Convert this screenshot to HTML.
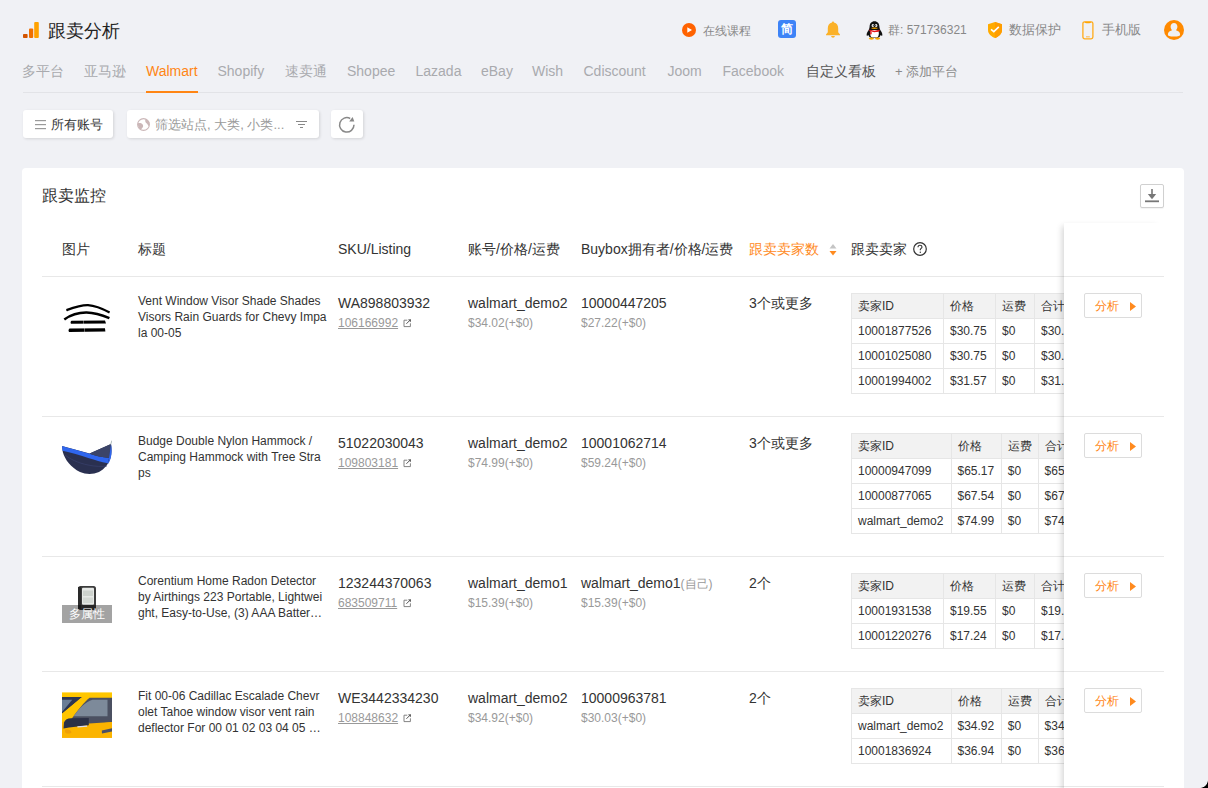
<!DOCTYPE html>
<html><head><meta charset="utf-8">
<style>
*{box-sizing:border-box;margin:0;padding:0}
html,body{width:1208px;height:788px;overflow:hidden}
body{background:#f0f1f5;font-family:"Liberation Sans",sans-serif;color:#333;position:relative}
.a{position:absolute;white-space:nowrap}
svg{position:absolute;display:block}
.t14{font-size:14px;line-height:20px}
.t12{font-size:12px;line-height:16px}
.t13{font-size:13px;line-height:18px}
.tab{position:absolute;top:61px;font-size:14px;line-height:20px;color:#a9aaae;white-space:nowrap}
.hdr{color:#888;font-size:12px;line-height:16px;top:22px}
.btn{position:absolute;background:#fff;border-radius:3px;box-shadow:1px 1px 3px rgba(0,0,0,.12)}
.card{position:absolute;left:22px;top:168px;width:1162px;height:640px;background:#fff;border-radius:4px}
.th{position:absolute;top:239px;font-size:14px;line-height:20px;color:#333;white-space:nowrap}
.hl{position:absolute;left:42px;width:1122px;height:1px;background:#e8e8e8}
.ttl{position:absolute;left:138px;width:192px;font-size:12px;line-height:16px;color:#333;word-break:break-all;white-space:normal}
.sku{position:absolute;left:338px;font-size:14px;line-height:20px;white-space:nowrap}
.lnk{position:absolute;left:338px;font-size:12px;line-height:16px;color:#999;text-decoration:underline;white-space:nowrap}
.acc{position:absolute;font-size:14px;line-height:20px;white-space:nowrap}
.pr{position:absolute;font-size:12px;line-height:16px;color:#999;white-space:nowrap}
.nt{position:absolute;left:851px;border-collapse:collapse;font-size:12px;color:#333}
.nt td{border:1px solid #e6e6e6;height:25px;padding:0 6px;white-space:nowrap;line-height:16px}
.nt tr:first-child td{background:#f2f2f2}
.fx{position:absolute;left:1064px;top:223px;width:100px;height:600px;background:#fff;box-shadow:-5px 0 6px -3px rgba(0,0,0,.16)}
.an{position:absolute;left:1084px;width:58px;height:25px;border:1px solid #dcdcdc;border-radius:2px;background:#fff}
.an span{position:absolute;left:10px;top:4px;font-size:12px;line-height:16px;color:#ff8514}
</style></head><body>

<!-- logo -->
<svg style="left:23px;top:22px" width="16" height="16" viewBox="0 0 16 16">
<rect x="0" y="12" width="4.6" height="4" rx="0.8" fill="#d35400"/>
<rect x="6" y="6.5" width="4.2" height="9.5" rx="1" fill="#f07000"/>
<rect x="11.2" y="0" width="4.6" height="16" rx="1" fill="#ffa200"/>
</svg>
<div class="a" style="left:48px;top:19px;font-size:18px;line-height:24px;color:#222;font-weight:500">跟卖分析</div>

<!-- header right -->
<svg style="left:682px;top:23px" width="14" height="14" viewBox="0 0 14 14"><circle cx="7" cy="7" r="7" fill="#ff6200"/><path d="M5.3 4.2 L10 7 L5.3 9.8Z" fill="#fff"/></svg>
<div class="a hdr" style="left:702.5px;top:22.7px">在线课程</div>
<div class="a" style="left:778px;top:20px;width:18px;height:18px;background:#3d83f7;border-radius:3px;color:#fff;font-size:12px;line-height:18px;text-align:center;font-weight:bold">简</div>
<svg style="left:825px;top:20.5px" width="16" height="17" viewBox="0 0 16 17"><path d="M8 0.5c0.7 0 1 .5 1 1 2.8.6 4.2 2.8 4.2 5.8v4l1.8 2.2v.8H1v-.8l1.8-2.2v-4C2.8 4.3 4.2 2.1 7 1.5c0-.5.3-1 1-1z" fill="#fbb128"/><path d="M6.2 15h3.6c0 1-.8 1.7-1.8 1.7S6.2 16 6.2 15z" fill="#fbb128"/></svg>
<svg style="left:865.5px;top:20.5px" width="17" height="19" viewBox="0 0 17 19">
<path d="M8.5 0.3 C11.6 0.3 13.3 2.6 13.4 5.6 C13.5 7 13.8 8.4 14.6 9.6 C15.8 11.3 16.6 13 16.3 14.4 C16 15.2 15.2 14.8 14.6 14 C14.2 15.5 13 16.6 11.5 17 L5.5 17 C4 16.6 2.8 15.5 2.4 14 C1.8 14.8 1 15.2 .7 14.4 C.4 13 1.2 11.3 2.4 9.6 C3.2 8.4 3.5 7 3.6 5.6 C3.7 2.6 5.4 .3 8.5 .3z" fill="#111"/>
<path d="M4.3 11 C4.5 9.5 6 9 8.5 9 C11 9 12.5 9.5 12.7 11 C13.2 13 12.6 15.8 11 16.6 L6 16.6 C4.4 15.8 3.8 13 4.3 11z" fill="#fff"/>
<ellipse cx="6.9" cy="4.5" rx="1.25" ry="1.5" fill="#fff"/><ellipse cx="10.1" cy="4.5" rx="1.25" ry="1.5" fill="#fff"/>
<circle cx="7.3" cy="4.7" r=".6" fill="#111"/><circle cx="9.7" cy="4.7" r=".6" fill="#111"/>
<path d="M5.2 7 C6.5 6.3 10.5 6.3 11.8 7 C11 8.2 6 8.2 5.2 7z" fill="#f5a500"/>
<path d="M3.6 8.6 C6 10 11 10 13.4 8.6 L13.7 10 C11 11.6 6 11.6 3.3 10z" fill="#e8141a"/>
<path d="M4.4 10.4 L4 13.6 L5.6 13.2 L5.6 10.8z" fill="#e8141a"/>
<ellipse cx="5.4" cy="17.6" rx="2.6" ry="1.1" fill="#f5a800"/><ellipse cx="11.6" cy="17.6" rx="2.6" ry="1.1" fill="#f5a800"/>
</svg>
<div class="a hdr" style="left:888px">群: 571736321</div>
<svg style="left:988px;top:22px" width="14" height="16" viewBox="0 0 14 16"><path d="M7 0 L14 2.3 V8 C14 11.8 10.8 14.6 7 16 C3.2 14.6 0 11.8 0 8 V2.3Z" fill="#ffab00"/><path d="M7 0 L14 2.3 V8 C14 11.8 10.8 14.6 7 16Z" fill="#ff9d00"/><path d="M3 7.3 L5.8 9.6 L10.8 4.8" stroke="#fff" stroke-width="1.6" fill="none"/></svg>
<div class="a hdr" style="left:1009px;font-size:13px;top:21.5px">数据保护</div>
<svg style="left:1082px;top:20.5px" width="12" height="19" viewBox="0 0 12 19"><rect x=".9" y=".8" width="10" height="17.1" rx="1.8" fill="none" stroke="#ffab1a" stroke-width="1.3"/><path d="M2.5 .8 H9.3 C9 2 8 2.3 5.9 2.3 C3.8 2.3 2.8 2 2.5 .8z" fill="#ffa500"/><rect x="4" y="15.4" width="3.8" height=".9" fill="#ffb030"/></svg>
<div class="a hdr" style="left:1101.5px;font-size:13px;top:21.5px">手机版</div>
<svg style="left:1164px;top:20px" width="20" height="20" viewBox="0 0 20 20"><circle cx="10" cy="10" r="10" fill="#ff8a00"/><path d="M10 2.9 C12 2.9 13.4 4.5 13.4 6.5 C13.4 8.2 12.6 9.5 12 10.3 C14.5 11 16.1 12.5 16.1 14.5 C16.1 16 14.5 16.6 10 16.6 C5.5 16.6 3.9 16 3.9 14.5 C3.9 12.5 5.5 11 8 10.3 C7.4 9.5 6.6 8.2 6.6 6.5 C6.6 4.5 8 2.9 10 2.9z" fill="#eff0f4"/></svg>

<!-- tabs -->
<div class="tab" style="left:22px">多平台</div>
<div class="tab" style="left:84px">亚马逊</div>
<div class="tab" style="left:146px;color:#ff8514">Walmart</div>
<div class="tab" style="left:217.5px">Shopify</div>
<div class="tab" style="left:285px">速卖通</div>
<div class="tab" style="left:347px">Shopee</div>
<div class="tab" style="left:415.5px">Lazada</div>
<div class="tab" style="left:481px">eBay</div>
<div class="tab" style="left:532px">Wish</div>
<div class="tab" style="left:583.5px">Cdiscount</div>
<div class="tab" style="left:667.5px">Joom</div>
<div class="tab" style="left:722.5px">Facebook</div>
<div class="tab" style="left:806px;color:#555">自定义看板</div>
<div class="tab" style="left:895px;color:#8a8a8a;font-size:13px;top:62px">+ 添加平台</div>
<div class="a" style="left:23px;top:92px;width:1160px;height:1px;background:#e2e3e7"></div>
<div class="a" style="left:146px;top:91px;width:52px;height:2px;background:#ff8514"></div>

<!-- filter buttons -->
<div class="btn" style="left:23px;top:110px;width:90px;height:28px"></div>
<svg style="left:35px;top:119px" width="11" height="11" viewBox="0 0 11 11"><rect y="1" width="11" height="1.2" fill="#9a9a9a"/><rect y="5" width="11" height="1.2" fill="#9a9a9a"/><rect y="9" width="11" height="1.2" fill="#9a9a9a"/></svg>
<div class="a t13" style="left:51px;top:115.5px;color:#333">所有账号</div>
<div class="btn" style="left:127px;top:110px;width:192px;height:28px"></div>
<svg style="left:137px;top:118px" width="13" height="13" viewBox="0 0 13 13"><circle cx="6.5" cy="6.5" r="5.9" fill="none" stroke="#cbb7b8" stroke-width="1.1"/><path d="M0.8 5.2 C2.5 4.6 4.5 5 5.5 6.3 C6.5 7.6 6.3 9 5.2 10 C4.6 10.5 4.2 11.5 4 12 C2 10.8 0.8 8.5 0.8 5.2z" fill="#cbb7b8"/><path d="M8.4 1.2 C8 2.5 8.2 4 9.2 5 C10 5.8 11 6.5 11.5 8.3 C12.5 7 12.8 4.5 12 3.5 C11 2.2 9.8 1.5 8.4 1.2z" fill="#cbb7b8"/></svg>
<div class="a t13" style="left:155px;top:115.5px;color:#9a9a9a">筛选站点, 大类, 小类...</div>
<svg style="left:295px;top:120px" width="13" height="9" viewBox="0 0 13 9"><rect x="1" y="1" width="11" height="1" fill="#888"/><rect x="3" y="4" width="7" height="1" fill="#888"/><rect x="5" y="7" width="3" height="1" fill="#888"/></svg>
<div class="btn" style="left:331px;top:110px;width:32px;height:28px"></div>
<svg style="left:338px;top:116px" width="18" height="18" viewBox="0 0 18 18"><path d="M16 8.8 A7.2 7.2 0 1 1 12.2 2.5" fill="none" stroke="#888" stroke-width="1.5"/><path d="M14.6 1 L11.2 5.4 L16.3 5.6z" fill="#888"/></svg>

<!-- card -->
<div class="card"></div>
<div class="a" style="left:42px;top:185px;font-size:16px;line-height:22px;color:#333">跟卖监控</div>
<div class="a" style="left:1140px;top:184px;width:24px;height:24px;border:1px solid #d0d0d0;border-radius:2px;background:#fff;box-shadow:0 1px 1px rgba(0,0,0,.05)"></div>
<svg style="left:1145px;top:188px" width="14" height="16" viewBox="0 0 14 16"><rect x="6.2" y="1" width="1.6" height="7" fill="#777"/><path d="M2.8 6 L7 11.2 L11.2 6z" fill="#777"/><rect x="0" y="12.4" width="14" height="1.8" fill="#777"/></svg>


<div class="hl" style="top:416px"></div>
<svg style="left:62px;top:293px" width="50" height="50" viewBox="0 0 50 50">
<path d="M4.5 17.2 C12 14.5 20 12 26 12.2 C33 12.6 41 16 47.6 19.6" stroke="#000" stroke-width="2.3" fill="none"/>
<path d="M4.2 15.8 L5.5 18.5 L4.6 17.8z" fill="#000"/>
<path d="M2.3 26.5 C9 21.8 17 19.5 24.6 19.6 C33 19.7 41 22.5 47.4 25.2" stroke="#000" stroke-width="2.5" fill="none"/>
<path d="M9.5 27.8 L43 27.6 L44 30.4 L9 30.8 C8.3 29.8 8.6 28.4 9.5 27.8z" fill="#000"/>
<rect x="21.5" y="27" width="0.5" height="4.5" fill="#fff" opacity=".7"/>
<path d="M7.5 35.4 L43 35.2 L43.4 38.6 L7 38.9 C6.2 37.8 6.5 36 7.5 35.4z" fill="#000"/>
<rect x="22.4" y="34.8" width="0.5" height="4.5" fill="#fff" opacity=".7"/>
</svg>

<div class="a t12" style="left:138px;top:293px;color:#333">Vent Window Visor Shade Shades</div>
<div class="a t12" style="left:138px;top:309px;color:#333">Visors Rain Guards for Chevy Impa</div>
<div class="a t12" style="left:138px;top:325px;color:#333">la 00-05</div>
<div class="sku" style="top:292.5px">WA898803932</div>
<div class="lnk" style="top:315.2px">106166992</div>
<svg style="left:402.5px;top:318.7px" width="9" height="9" viewBox="0 0 9 9"><path d="M4.3 1.2 H1 V7.6 H7.4 V4.3" stroke="#777" stroke-width=".9" fill="none"/><path d="M3.4 4.8 L6.8 1.4" stroke="#555" stroke-width="1"/><path d="M5 .4 L8 .2 L7.8 3.2z" fill="#555"/></svg>
<div class="acc" style="left:468px;top:292.5px">walmart_demo2</div>
<div class="pr" style="left:468px;top:315.2px">$34.02(+$0)</div>
<div class="acc" style="left:581px;top:292.5px">10000447205</div>
<div class="pr" style="left:581px;top:315.2px">$27.22(+$0)</div>
<div class="acc" style="left:749px;top:293px">3个或更多</div>
<table class="nt" style="top:293px;width:243px;table-layout:fixed"><colgroup><col style="width:92px"><col style="width:52px"><col style="width:39px"><col style="width:60px"></colgroup><tr><td>卖家ID</td><td>价格</td><td>运费</td><td>合计</td></tr><tr><td>10001877526</td><td>$30.75</td><td>$0</td><td>$30.75</td></tr><tr><td>10001025080</td><td>$30.75</td><td>$0</td><td>$30.75</td></tr><tr><td>10001994002</td><td>$31.57</td><td>$0</td><td>$31.57</td></tr></table>
<div class="hl" style="top:556px"></div>
<svg style="left:62px;top:433px" width="50" height="50" viewBox="0 0 50 50">
<path d="M0 13 L0.8 19 C3 27 9 34.5 18 39 C24 41.5 31 41.5 37 39 C42.5 36 46.5 31 48.5 25 C50 20 49.6 14 49 11 L27.6 20.5 Z" fill="#2a3050"/>
<path d="M3 22 C8 26 16 30 26 32 C33 33.5 40 33.8 45 33" stroke="#3a4270" stroke-width=".8" fill="none" opacity=".8"/>
<path d="M0 13 C9 15.5 18 18 27.6 20.8 C34 22.8 40 24.5 47 25 L45.8 30.2 C39 28.8 33 27 27 25.2 C18 22.5 9 19.6 0.5 17.8 Z" fill="#2f66ee"/>
<path d="M27.6 20.5 L49 11 L47 25 C40 24.5 34 22.8 27.6 20.8z" fill="#3b4468"/>
<path d="M49 11 C49.8 15 50 21 48.6 25.5 C47.8 28 46.8 30 45.8 31.5 L47 25 Z" fill="#2f66ee"/>
<path d="M48.6 11.5 L50 7.5" stroke="#9aa" stroke-width=".8"/>
</svg>

<div class="a t12" style="left:138px;top:433px;color:#333">Budge Double Nylon Hammock /</div>
<div class="a t12" style="left:138px;top:449px;color:#333">Camping Hammock with Tree Stra</div>
<div class="a t12" style="left:138px;top:465px;color:#333">ps</div>
<div class="sku" style="top:432.5px">51022030043</div>
<div class="lnk" style="top:455.2px">109803181</div>
<svg style="left:402.5px;top:458.7px" width="9" height="9" viewBox="0 0 9 9"><path d="M4.3 1.2 H1 V7.6 H7.4 V4.3" stroke="#777" stroke-width=".9" fill="none"/><path d="M3.4 4.8 L6.8 1.4" stroke="#555" stroke-width="1"/><path d="M5 .4 L8 .2 L7.8 3.2z" fill="#555"/></svg>
<div class="acc" style="left:468px;top:432.5px">walmart_demo2</div>
<div class="pr" style="left:468px;top:455.2px">$74.99(+$0)</div>
<div class="acc" style="left:581px;top:432.5px">10001062714</div>
<div class="pr" style="left:581px;top:455.2px">$59.24(+$0)</div>
<div class="acc" style="left:749px;top:433px">3个或更多</div>
<table class="nt" style="top:433px;width:246.6px;table-layout:fixed"><colgroup><col style="width:99.5px"><col style="width:50.3px"><col style="width:36.8px"><col style="width:60px"></colgroup><tr><td>卖家ID</td><td>价格</td><td>运费</td><td>合计</td></tr><tr><td>10000947099</td><td>$65.17</td><td>$0</td><td>$65.17</td></tr><tr><td>10000877065</td><td>$67.54</td><td>$0</td><td>$67.54</td></tr><tr><td>walmart_demo2</td><td>$74.99</td><td>$0</td><td>$74.99</td></tr></table>
<div class="hl" style="top:671px"></div>
<svg style="left:62px;top:573px" width="50" height="50" viewBox="0 0 50 50">
<rect x="16" y="13" width="18" height="24" rx="2.5" fill="#3c3c3c"/>
<rect x="16" y="14" width="3" height="22" fill="#2a2a2a"/>
<rect x="20" y="14.7" width="12" height="17" rx="1" fill="#e6e9e6"/>
<rect x="21" y="17.5" width="10" height="5.5" fill="#cdd2cd"/>
<rect x="21" y="24.5" width="10" height="5.5" fill="#d3d8d3"/>
</svg>
<div class="a" style="left:62px;top:605px;width:50px;height:18px;background:rgba(0,0,0,.36);color:#fff;font-size:12px;line-height:18px;text-align:center">多属性</div>

<div class="a t12" style="left:138px;top:573px;color:#333">Corentium Home Radon Detector</div>
<div class="a t12" style="left:138px;top:589px;color:#333">by Airthings 223 Portable, Lightwei</div>
<div class="a t12" style="left:138px;top:605px;color:#333">ght, Easy-to-Use, (3) AAA Batter…</div>
<div class="sku" style="top:572.5px">123244370063</div>
<div class="lnk" style="top:595.2px">683509711</div>
<svg style="left:402.5px;top:598.7px" width="9" height="9" viewBox="0 0 9 9"><path d="M4.3 1.2 H1 V7.6 H7.4 V4.3" stroke="#777" stroke-width=".9" fill="none"/><path d="M3.4 4.8 L6.8 1.4" stroke="#555" stroke-width="1"/><path d="M5 .4 L8 .2 L7.8 3.2z" fill="#555"/></svg>
<div class="acc" style="left:468px;top:572.5px">walmart_demo1</div>
<div class="pr" style="left:468px;top:595.2px">$15.39(+$0)</div>
<div class="acc" style="left:581px;top:572.5px">walmart_demo1<span style="font-size:12px;color:#999">(自己)</span></div>
<div class="pr" style="left:581px;top:595.2px">$15.39(+$0)</div>
<div class="acc" style="left:749px;top:573px">2个</div>
<table class="nt" style="top:573px;width:243px;table-layout:fixed"><colgroup><col style="width:92px"><col style="width:52px"><col style="width:39px"><col style="width:60px"></colgroup><tr><td>卖家ID</td><td>价格</td><td>运费</td><td>合计</td></tr><tr><td>10001931538</td><td>$19.55</td><td>$0</td><td>$19.55</td></tr><tr><td>10001220276</td><td>$17.24</td><td>$0</td><td>$17.24</td></tr></table>
<div class="hl" style="top:786px"></div>
<svg style="left:62px;top:688px" width="50" height="50" viewBox="0 0 50 50">
<defs><linearGradient id="cb" x1="0" y1="0" x2="0" y2="1"><stop offset="0" stop-color="#ffc800"/><stop offset="1" stop-color="#f9a800"/></linearGradient></defs>
<rect x="0" y="4.4" width="50" height="45.4" fill="url(#cb)"/>
<path d="M0 8.9 L20.2 8.9 L0 25.8z" fill="#2c3652"/>
<path d="M0 11.8 L10.3 11.8 L0 24z" fill="#6a7d96"/>
<path d="M20.2 8.9 L27.6 8.9 C22 14 16 22 9.5 30.5 L0 34 L0 25.8z" fill="#ffc400"/>
<path d="M27.6 9.7 L50 9.7 L50 34 L27 35.5 L9.5 31 C16 22 22 14 27.6 9.7z" fill="#4b5061"/>
<path d="M30.5 11.8 L45.5 11.8 L45.5 28.3 L11.5 28.3 C17 20.5 23 14 30.5 11.8z" fill="#7d8a9a"/>
<path d="M0 40.5 L27 37 L50 34 L50 49.8 L0 49.8z" fill="#fbb400"/>
<path d="M2 34.5 C3 31.5 5.5 30.3 9 30.2 L26.8 30 L26.8 37.3 L7 39.5 L1.5 40.5z" fill="#2b3046"/>
<path d="M15.3 38.3 L25 37.5 L25.2 38.8 L15.5 39.5z" fill="#dde"/>
<path d="M3 42 C6 41 9 42 9.5 44.5 C8 46 4 46 3 44z" fill="#e8950a" opacity=".7"/>
<path d="M39.8 42.5 L50 40.3 L50 43.5 L40 45.5z" fill="#4a5066"/>
</svg>

<div class="a t12" style="left:138px;top:688px;color:#333">Fit 00-06 Cadillac Escalade Chevr</div>
<div class="a t12" style="left:138px;top:704px;color:#333">olet Tahoe window visor vent rain</div>
<div class="a t12" style="left:138px;top:720px;color:#333">deflector For 00 01 02 03 04 05 …</div>
<div class="sku" style="top:687.5px">WE3442334230</div>
<div class="lnk" style="top:710.2px">108848632</div>
<svg style="left:402.5px;top:713.7px" width="9" height="9" viewBox="0 0 9 9"><path d="M4.3 1.2 H1 V7.6 H7.4 V4.3" stroke="#777" stroke-width=".9" fill="none"/><path d="M3.4 4.8 L6.8 1.4" stroke="#555" stroke-width="1"/><path d="M5 .4 L8 .2 L7.8 3.2z" fill="#555"/></svg>
<div class="acc" style="left:468px;top:687.5px">walmart_demo2</div>
<div class="pr" style="left:468px;top:710.2px">$34.92(+$0)</div>
<div class="acc" style="left:581px;top:687.5px">10000963781</div>
<div class="pr" style="left:581px;top:710.2px">$30.03(+$0)</div>
<div class="acc" style="left:749px;top:688px">2个</div>
<table class="nt" style="top:688px;width:246.6px;table-layout:fixed"><colgroup><col style="width:99.5px"><col style="width:50.3px"><col style="width:36.8px"><col style="width:60px"></colgroup><tr><td>卖家ID</td><td>价格</td><td>运费</td><td>合计</td></tr><tr><td>walmart_demo2</td><td>$34.92</td><td>$0</td><td>$34.92</td></tr><tr><td>10001836924</td><td>$36.94</td><td>$0</td><td>$36.94</td></tr></table>

<div class="th" style="left:62px">图片</div>
<div class="th" style="left:138px">标题</div>
<div class="th" style="left:338px">SKU/Listing</div>
<div class="th" style="left:468px">账号/价格/运费</div>
<div class="th" style="left:581px">Buybox拥有者/价格/运费</div>
<div class="th" style="left:749px;color:#ff8a1e">跟卖卖家数</div>
<svg style="left:829px;top:243px" width="8" height="13" viewBox="0 0 8 13"><path d="M4 1 L7.5 5.5 H.5z" fill="#c4c4c4"/><path d="M4 12.5 L7.5 8 H.5z" fill="#ff8a1e"/></svg>
<div class="th" style="left:851px">跟卖卖家</div>
<svg style="left:913px;top:242px" width="14" height="14" viewBox="0 0 14 14"><circle cx="7" cy="7" r="6.3" stroke="#333" stroke-width="1.2" fill="none"/><path d="M5 5.3 C5 3.8 6 3.3 7 3.3 C8.2 3.3 9 4 9 5.1 C9 6.3 7.5 6.5 7.3 7.6 V8.3" stroke="#333" stroke-width="1.1" fill="none"/><circle cx="7.3" cy="10.3" r=".7" fill="#333"/></svg>
<div class="hl" style="top:276px"></div>
<div class="fx"></div>

<div class="an" style="top:293px"><span>分析</span><svg style="left:45px;top:8px" width="6" height="9" viewBox="0 0 6 9"><path d="M0 0 L6 4.5 L0 9z" fill="#ff8a1e"/></svg></div>
<div class="an" style="top:433px"><span>分析</span><svg style="left:45px;top:8px" width="6" height="9" viewBox="0 0 6 9"><path d="M0 0 L6 4.5 L0 9z" fill="#ff8a1e"/></svg></div>
<div class="an" style="top:573px"><span>分析</span><svg style="left:45px;top:8px" width="6" height="9" viewBox="0 0 6 9"><path d="M0 0 L6 4.5 L0 9z" fill="#ff8a1e"/></svg></div>
<div class="an" style="top:688px"><span>分析</span><svg style="left:45px;top:8px" width="6" height="9" viewBox="0 0 6 9"><path d="M0 0 L6 4.5 L0 9z" fill="#ff8a1e"/></svg></div>
<div class="hl" style="left:1064px;width:100px;top:276px"></div>
<div class="hl" style="left:1064px;width:100px;top:416px"></div>
<div class="hl" style="left:1064px;width:100px;top:556px"></div>
<div class="hl" style="left:1064px;width:100px;top:671px"></div>
<div class="hl" style="left:1064px;width:100px;top:786px"></div>
<div class="a" style="left:1200px;top:780px;width:8px;height:8px;background:radial-gradient(circle at 0 0, transparent 7.5px, #000 8.2px)"></div>
</body></html>
